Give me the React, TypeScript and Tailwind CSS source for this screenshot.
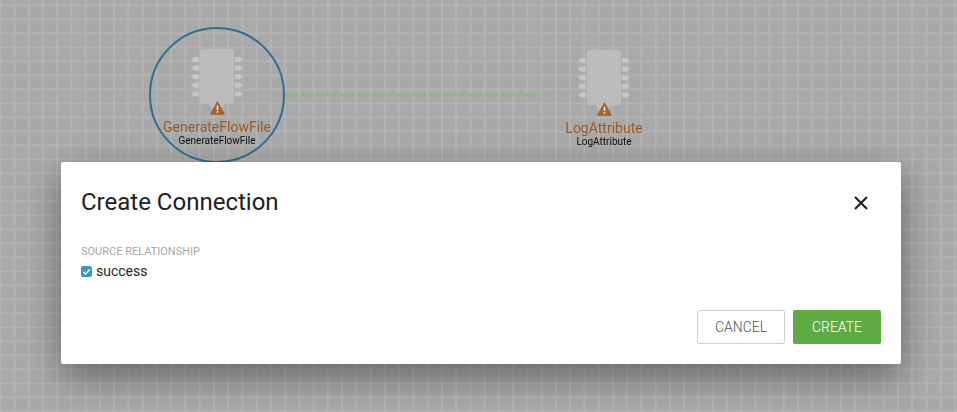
import React from 'react';

const font = 'font-["Roboto","Liberation_Sans",sans-serif]';

const Warning = ({ className }: { className: string }) => (
  <svg className={className} viewBox="0 0 16 15">
    <path d="M8 1 15.2 14H.8Z" fill="#a5622f" stroke="#a5622f" strokeLinejoin="round" strokeWidth="1.2" />
    <rect x="7.1" y="5" width="1.8" height="4.8" fill="#e2e2e2" />
    <rect x="7.1" y="10.8" width="1.8" height="1.8" fill="#e2e2e2" />
  </svg>
);

const Ports = ({ flip }: { flip?: boolean }) => (
  <svg className={`h-[42px] w-[8px] ${flip ? '-scale-x-100' : ''}`} viewBox="0 0 8 42">
    {[0, 8.6, 17.2, 25.8, 34.4].map((y) => (
      <path key={y} d={`M8 ${y + 1}V${y + 6}H3L0 ${y + 3.5}L3 ${y + 1}Z`} fill="#c6c6c6" />
    ))}
  </svg>
);

interface ProcessorProps {
  name: string;
  className: string;
}

const Processor = ({ name, className }: ProcessorProps) => (
  <div className={`absolute flex w-[130px] flex-col items-center blur-[0.3px] ${className}`}>
    <div className="flex items-center gap-[1px]">
      <Ports />
      <div className="relative h-[55px] w-[34px] rounded-[3px] bg-[#bcbcbc]">
        <div className="absolute -bottom-[5px] left-[9px] h-[14px] w-[16px] rounded-full bg-[#bcbcbc]" />
      </div>
      <Ports flip />
    </div>
    <Warning className="relative -mt-[3px] h-[14px] w-[15px]" />
    <div className="mt-[4px] text-[14px] leading-[17px] text-[#9c5a28]">{name}</div>
    <div className="-mt-[1px] text-[10px] leading-[12px] text-[#0c0c0c]">{name}</div>
  </div>
);

export default function App() {
  return (
    <div className={`relative h-[412px] w-[957px] overflow-hidden bg-[#a9a9a9] bg-[linear-gradient(#b1b1b1_0,#b9b9b9_1px,transparent_2px),linear-gradient(90deg,#b1b1b1_0,#b9b9b9_1px,transparent_2px)] bg-[size:14.25px_14px] bg-[position:13.5px_4.5px] ${font}`}>
      {/* Canvas */}
      <div className="absolute left-[149px] top-[27px] h-[136px] w-[136px] rounded-full border-2 border-[#2f6f94]" />
      <svg className="absolute left-[285px] top-[93px] h-[4px] w-[252px]" viewBox="0 0 252 4">
        <line x1="0" y1="2" x2="252" y2="2" stroke="#78c566" strokeWidth="3" strokeDasharray="4 4" />
      </svg>
      <Processor name="GenerateFlowFile" className="left-[152px] top-[49px]" />
      <Processor name="LogAttribute" className="left-[539px] top-[50px]" />

      {/* Dialog */}
      <div className="absolute left-[61px] top-[162px] flex h-[202px] w-[840px] flex-col rounded-[2px] bg-white px-5 shadow-[0_12px_36px_rgba(0,0,0,0.42)]">
        <div className="flex items-center justify-between pt-[24px]">
          <h2 className="text-[24px] leading-[33px] text-[#212121]">Create Connection</h2>
          <svg className="mr-[13px] mt-[1px] h-[14px] w-[14px]" viewBox="0 0 14 14">
            <path d="M1 1 13 13M13 1 1 13" stroke="#1c1c1c" strokeWidth="2" fill="none" />
          </svg>
        </div>
        <div className="mt-[26px] text-[11px] leading-[14px] text-[#a8a8a8]">SOURCE RELATIONSHIP</div>
        <label className="mt-[2px] flex items-center gap-[4px] text-[14px] leading-[20px] text-[#262626]">
          <span className="flex h-[11px] w-[11px] items-center justify-center rounded-[2px] bg-[#3d97c4]">
            <svg className="h-[9px] w-[9px]" viewBox="0 0 10 10">
              <path d="M1.5 5.5 4 8 8.5 2.5" stroke="#fff" strokeWidth="1.6" fill="none" />
            </svg>
          </span>
          success
        </label>
        <div className="mt-auto flex justify-end gap-2 pb-5">
          <button className="h-[34px] w-[88px] rounded-[2px] border border-[#cfcfcf] text-[14px] font-light text-[#505050]">CANCEL</button>
          <button className="h-[34px] w-[88px] rounded-[2px] bg-[#5fab43] text-[14px] font-light text-white">CREATE</button>
        </div>
      </div>
    </div>
  );
}
